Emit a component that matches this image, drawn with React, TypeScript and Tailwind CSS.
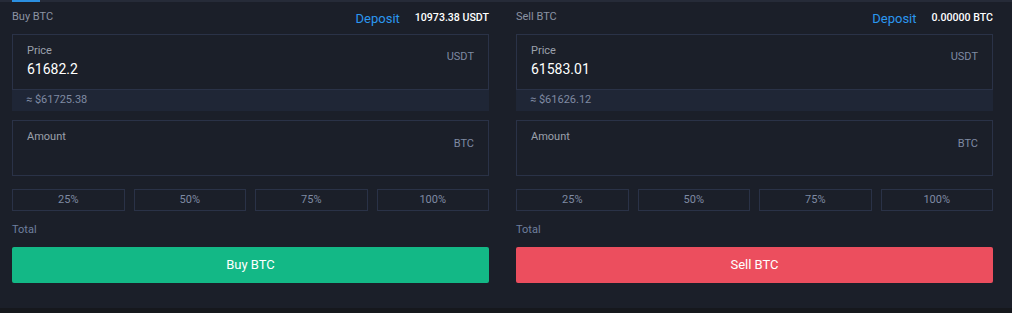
import React from "react";

type Side = {
  title: string;
  balance: string;
  price: string;
  approx: string;
  btn: string;
  btnClass: string;
};

function Panel({ s }: { s: Side }) {
  return (
    <div className="w-[477px] flex flex-col">
      <div className="flex items-center h-[32px] pb-[1px]">
        <span className="text-[11px] text-[#8b93a3]">{s.title}</span>
        <span className="ml-auto text-[13px] text-[#2b97f0] translate-y-[1px]">Deposit</span>
        <span className="ml-[15px] text-[10.6px] font-medium text-white">{s.balance}</span>
      </div>
      <div className="border border-[#2a3247] h-[56px] relative px-[14px] pt-[8px]">
        <div className="text-[11px] text-[#9ba1ac] leading-[15px]">Price</div>
        <div className="text-[14px] text-white leading-[20px] mt-[1px]">{s.price}</div>
        <div className="absolute right-[14px] top-[14px] text-[11px] text-[#7f8aa3]">USDT</div>
      </div>
      <div className="h-[21px] bg-[#1f2636] px-[14px] flex items-center text-[11px] text-[#7f8aa3]">
        ≈ {s.approx}
      </div>
      <div className="mt-[9px] border border-[#2a3247] h-[56px] relative px-[14px] pt-[8px]">
        <div className="text-[11px] text-[#9ba1ac] leading-[15px]">Amount</div>
        <div className="absolute right-[14px] top-[15px] text-[11px] text-[#7f8aa3]">BTC</div>
      </div>
      <div className="mt-[13px] grid grid-cols-4 gap-[9px]">
        {["25%", "50%", "75%", "100%"].map((p) => (
          <div
            key={p}
            className="h-[22px] border border-[#2a3247] flex items-center justify-center text-[11px] text-[#7f8aa3]"
          >
            {p}
          </div>
        ))}
      </div>
      <div className="mt-[11px] text-[11px] text-[#6f7f9e] leading-[15px]">Total</div>
      <div
        className={`mt-[10px] h-[36px] rounded-[2px] flex items-center justify-center text-[13px] text-white ${s.btnClass}`}
      >
        {s.btn}
      </div>
    </div>
  );
}

export default function App() {
  const sides: Side[] = [
    {
      title: "Buy BTC",
      balance: "10973.38 USDT",
      price: "61682.2",
      approx: "$61725.38",
      btn: "Buy BTC",
      btnClass: "bg-[#13b886]",
    },
    {
      title: "Sell BTC",
      balance: "0.00000 BTC",
      price: "61583.01",
      approx: "$61626.12",
      btn: "Sell BTC",
      btnClass: "bg-[#ec4e5e]",
    },
  ];
  return (
    <div
      className="w-[1012px] h-[313px] bg-[#16181d] flex flex-col"
      style={{ fontFamily: "Roboto, 'Noto Sans', sans-serif" }}
    >
      <div className="h-[308px] bg-[#1b1f29] relative border-t-[2px] border-[#262b38]">
        <div className="absolute left-[12px] top-[-2px] w-[28px] h-[2px] bg-[#2b8fe0]" />
        <div className="flex gap-[27px] pl-[12px]">
          {sides.map((s) => (
            <Panel key={s.title} s={s} />
          ))}
        </div>
      </div>
    </div>
  );
}
